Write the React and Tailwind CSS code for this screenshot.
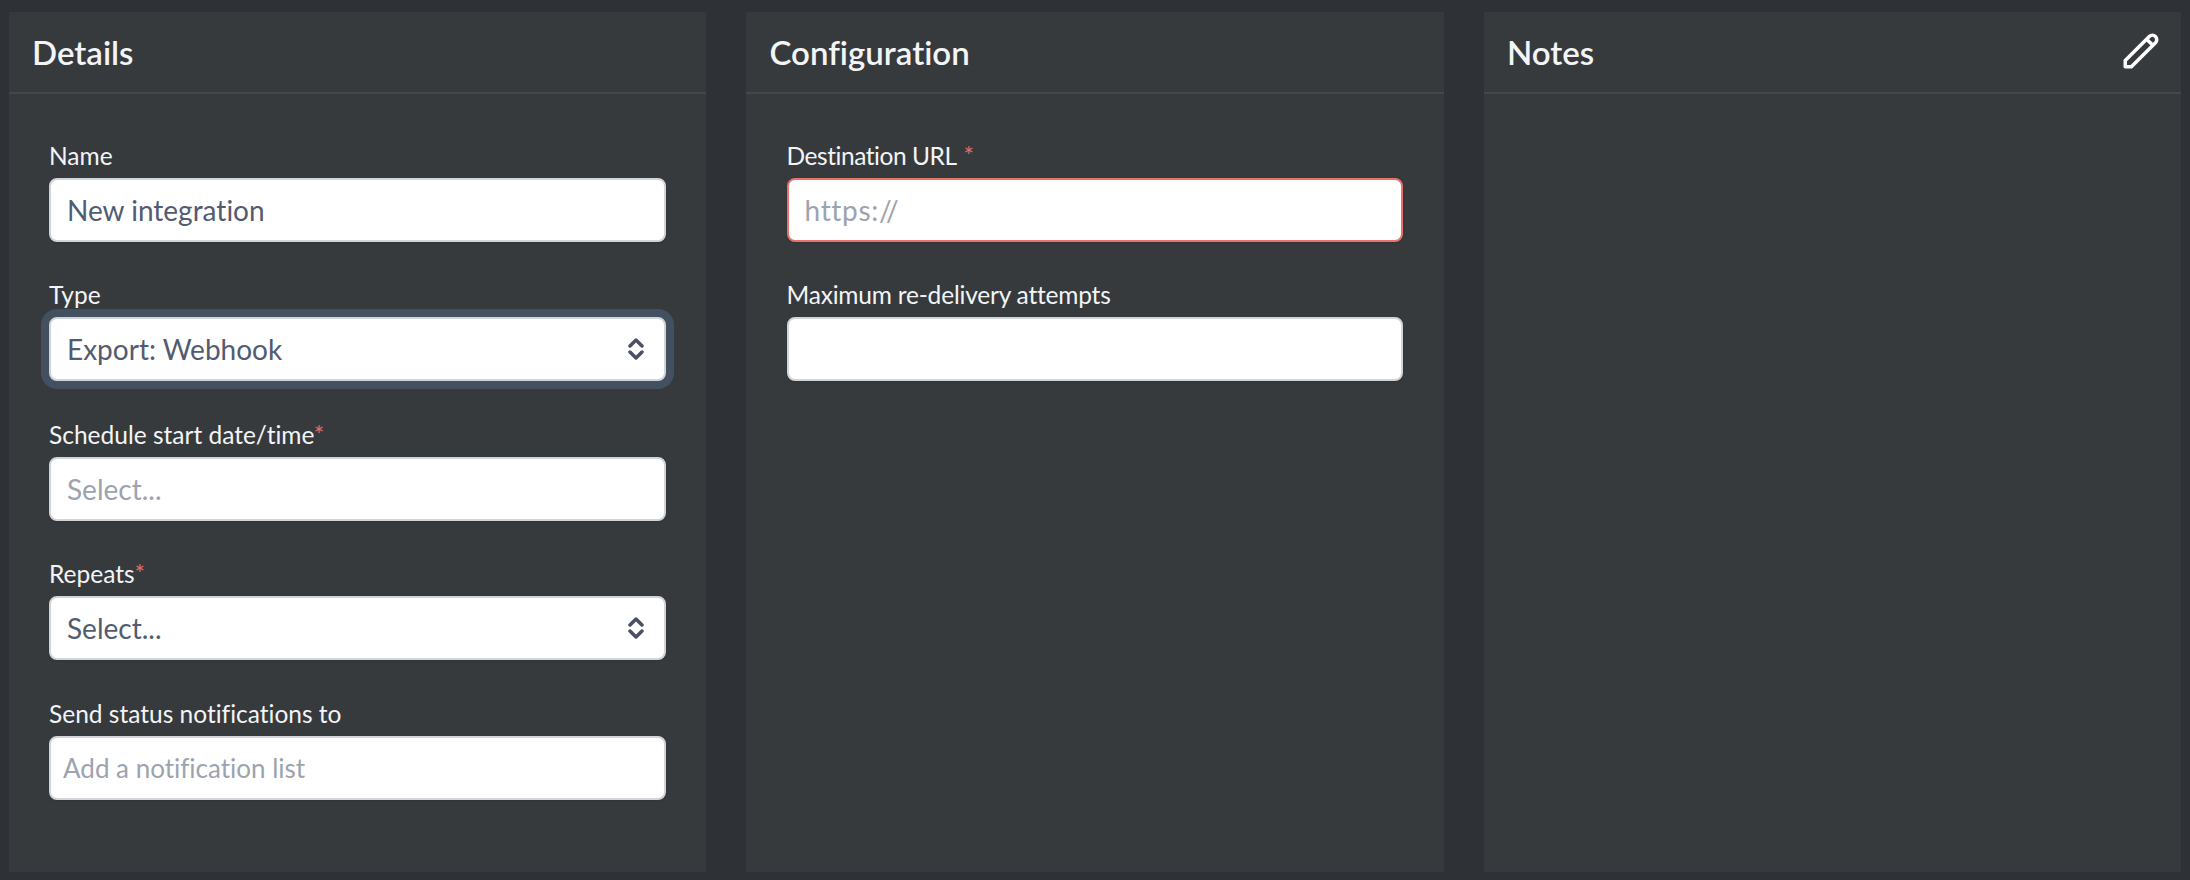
import React from 'react';

const fieldBox = 'w-full h-[64px] bg-white rounded-[8px] border-2 border-[#d1d5db] text-[#525b70] outline-none placeholder:text-[#9ca3af] shadow-[0_1px_2px_rgba(0,0,0,0.1)]';

const Chevrons = () => (
    <svg viewBox="0 0 16 24" fill="none" stroke="#4b5162" strokeWidth="3.5" strokeLinecap="round" strokeLinejoin="round" className="absolute right-[22px] top-[20px] w-[16px] h-[24px] pointer-events-none">
        <path d="M2 9l6-6 6 6" />
        <path d="M2 15l6 6 6-6" />
    </svg>
);

const Label = ({ text, star, gap, tight }) => (
    <label className={`block h-[38px] text-[24.5px] leading-[32px] text-[#f3f4f6] ${tight || ''}`}>
        {text}
        {star && <span className={`text-[#e06c6c] ${gap ? 'ml-[7px]' : ''}`}>*</span>}
    </label>
);

const Panel = ({ title, action, children }) => (
    <section className="w-[697.5px] h-[860px] bg-[#363a3d] flex flex-col">
        <header className="h-[82px] shrink-0 flex items-center justify-between pl-[23.5px] pr-[19px] border-b-2 border-[#44484d]">
            <h2 className="text-[33px] font-semibold text-[#f3f4f6] pt-[2px]">{title}</h2>
            {action}
        </header>
        <div className="px-[40.5px] pt-[45.6px] flex flex-col gap-[37.6px]">{children}</div>
    </section>
);

export default function App() {
    return (
        <div className="w-[2190px] h-[880px] overflow-hidden bg-[#2e3135] flex gap-[40px] pt-[12px] pl-[8.5px] font-['Lato',sans-serif] [font-variant-ligatures:none]">
            <Panel title="Details">
                <div>
                    <Label text="Name" />
                    <input className={`${fieldBox} px-[16px] text-[28px]`} defaultValue="New integration" />
                </div>
                <div>
                    <Label text="Type" />
                    <div className="relative">
                        <select className={`${fieldBox} px-[16px] text-[28px] appearance-none ring-[8px] ring-[#425060]`} defaultValue="webhook">
                            <option value="webhook">Export: Webhook</option>
                        </select>
                        <Chevrons />
                    </div>
                </div>
                <div>
                    <Label text="Schedule start date/time" star />
                    <input className={`${fieldBox} px-[16px] text-[28px]`} placeholder="Select..." />
                </div>
                <div>
                    <Label text="Repeats" star />
                    <div className="relative">
                        <select className={`${fieldBox} px-[16px] text-[28px] appearance-none`} defaultValue="">
                            <option value="">Select...</option>
                        </select>
                        <Chevrons />
                    </div>
                </div>
                <div>
                    <Label text="Send status notifications to" />
                    <input className={`${fieldBox} px-[12px] text-[26px]`} placeholder="Add a notification list" />
                </div>
            </Panel>
            <Panel title="Configuration">
                <div>
                    <Label text="Destination URL" star gap tight="tracking-[-0.45px]" />
                    <input className={`${fieldBox} px-[16px] text-[28px] tracking-[0.7px] border-[#e8736c]`} placeholder="https://" />
                </div>
                <div>
                    <Label text="Maximum re-delivery attempts" tight="tracking-[-0.2px]" />
                    <input className={`${fieldBox} px-[16px] text-[28px]`} />
                </div>
            </Panel>
            <Panel
                title="Notes"
                action={
                    <svg viewBox="0 0 24 24" fill="none" stroke="white" strokeWidth="2" strokeLinecap="round" strokeLinejoin="round" className="w-[42px] h-[42px] -mt-[2px]">
                        <path d="M15.232 5.232l3.536 3.536m-2.036-5.036a2.5 2.5 0 113.536 3.536L6.5 21.036H3v-3.572L16.732 3.732z" />
                    </svg>
                }
            />
        </div>
    );
}
